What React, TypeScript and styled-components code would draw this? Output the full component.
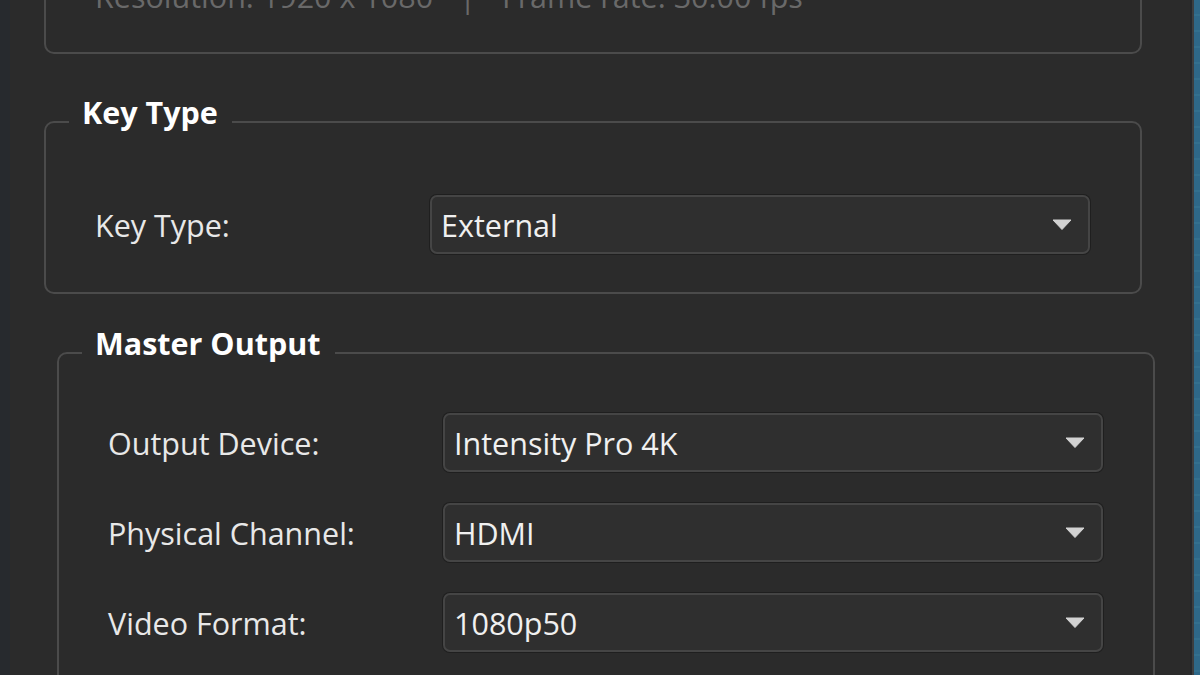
import React from 'react';
import styled, { createGlobalStyle } from 'styled-components';

const GlobalStyle = createGlobalStyle`
    html, body {
        margin: 0;
        padding: 0;
        background: #2b2b2b;
        overflow: hidden;
    }
`;

const Window = styled.div`
    display: flex;
    height: 675px;
    overflow: hidden;
    font-family: "Open Sans", "Noto Sans", sans-serif;
`;

const SideStrip = styled.div`
    width: 10px;
    flex-shrink: 0;
    background: #272a2e;
`;

const Panel = styled.div`
    flex: 1;
    background: #2b2b2b;
    padding: 0 48px 0 34px;
    overflow: hidden;
`;

const Column = styled.div`
    display: flex;
    flex-direction: column;
    margin-top: -56px;
`;

const EdgeLine = styled.div`
    width: 2px;
    flex-shrink: 0;
    background: #25282c;
    border-right: 2px solid #3c3e40;
`;

const ScrollStrip = styled.div`
    width: 6px;
    flex-shrink: 0;
    background: repeating-linear-gradient(#2e6889 0 14px, #33708f 14px 16px);
`;

interface GroupBoxProps {
    $indent?: number;
    $gapAbove?: number;
}

const GroupBox = styled.fieldset<GroupBoxProps>`
    margin: ${({ $gapAbove }) => $gapAbove || 0}px ${({ $indent }) => -($indent || 0)}px 0 ${({ $indent }) => $indent || 0}px;
    padding: 0;
    min-width: 0;
    border: 2px solid #4b4b4b;
    border-radius: 10px;
`;

const GroupTitle = styled.legend`
    margin-left: 23px;
    padding: 0 14px 20px 13px;
    font-size: 30.5px;
    line-height: 36px;
    font-weight: 700;
    color: #ffffff;
`;

interface GroupBodyProps {
    $top: number;
    $bottom: number;
}

const GroupBody = styled.div<GroupBodyProps>`
    display: flex;
    flex-direction: column;
    gap: 31px;
    padding: ${({ $top }) => $top}px 50px ${({ $bottom }) => $bottom}px 49px;
`;

const InfoLine = styled.div`
    display: flex;
    gap: 26px;
    font-size: 30.5px;
    line-height: 36px;
    color: #696969;
`;

const Row = styled.div`
    display: grid;
    grid-template-columns: 335px 1fr;
    align-items: center;
`;

const Label = styled.span`
    font-size: 30.5px;
    line-height: 36px;
    color: #e8e8e8;
`;

const Combo = styled.div`
    display: flex;
    align-items: center;
    justify-content: space-between;
    height: 59px;
    box-sizing: border-box;
    padding: 0 16px 0 9px;
    background: #2f2f2f;
    border: 2px solid #454545;
    border-radius: 7px;
    box-shadow: 0 0 0 1px #1f1f1f;
    font-size: 30.5px;
    color: #f0f0f0;
`;

const Arrow = () => (
    <svg width="20" height="11" viewBox="0 0 20 11">
        <path d="M1 1 L19 1 L10 10.5 Z" fill="#d2d2d2" stroke="#d2d2d2" strokeWidth="1" strokeLinejoin="round" />
    </svg>
);

const ComboBox = ({ value }: { value: string }) => (
    <Combo>
        <span>{value}</span>
        <Arrow />
    </Combo>
);

const Field = ({ label, value }: { label: string; value: string }) => (
    <Row>
        <Label>{label}</Label>
        <ComboBox value={value} />
    </Row>
);

const App = () => (
    <>
        <GlobalStyle />
        <Window>
            <SideStrip />
            <Panel>
                <Column>
                    <GroupBox>
                        <GroupBody $top={32} $bottom={38}>
                            <InfoLine>
                                <span>Resolution: 1920 x 1080</span>
                                <span>|</span>
                                <span>Frame rate: 30.00 fps</span>
                            </InfoLine>
                        </GroupBody>
                    </GroupBox>

                    <GroupBox $gapAbove={40}>
                        <GroupTitle>Key Type</GroupTitle>
                        <GroupBody $top={45} $bottom={38}>
                            <Field label="Key Type:" value="External" />
                        </GroupBody>
                    </GroupBox>

                    <GroupBox $gapAbove={31} $indent={13}>
                        <GroupTitle>Master Output</GroupTitle>
                        <GroupBody $top={32} $bottom={40}>
                            <Field label="Output Device:" value="Intensity Pro 4K" />
                            <Field label="Physical Channel:" value="HDMI" />
                            <Field label="Video Format:" value="1080p50" />
                        </GroupBody>
                    </GroupBox>
                </Column>
            </Panel>
            <EdgeLine />
            <ScrollStrip />
        </Window>
    </>
);

export default App;
